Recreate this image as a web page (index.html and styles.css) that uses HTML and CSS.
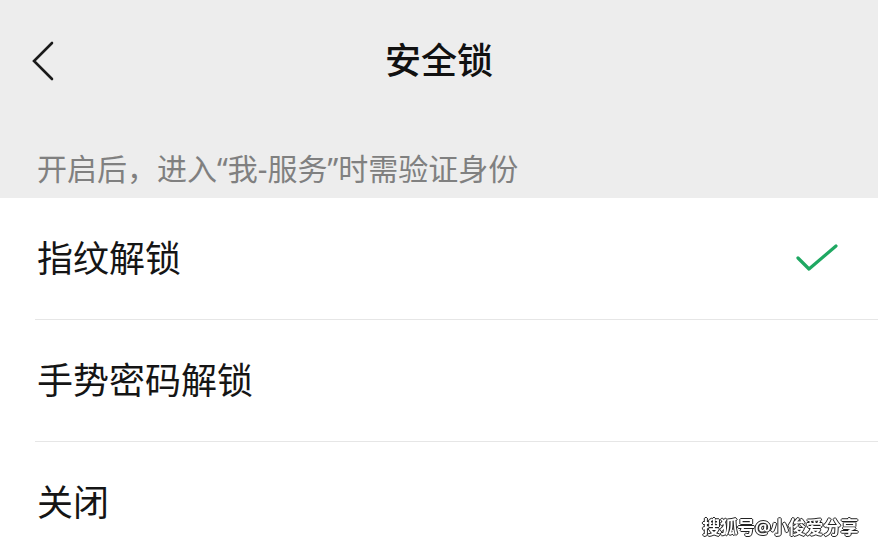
FILE: index.html
```html
<!DOCTYPE html>
<html lang="zh-CN">
<head>
    <meta charset="UTF-8">
    <meta name="viewport" content="width=device-width, initial-scale=1.0">
    <title>安全锁</title>
    <link rel="stylesheet" href="styles.css">
</head>
<body>
    <div class="header">
        <div class="nav">
            <div class="nav-left">
                <svg class="back" width="24" height="40" viewBox="0 0 24 40">
                    <polyline points="21,2 3,20 21,38" fill="none" stroke="#1a1a1a" stroke-width="2.6" stroke-linecap="round" stroke-linejoin="miter"/>
                </svg>
            </div>
            <div class="title">安全锁</div>
            <div class="nav-right"></div>
        </div>
        <div class="tip">开启后，进入“我-服务”时需验证身份</div>
    </div>

    <div class="list">
        <div class="item">
            <span class="label">指纹解锁</span>
            <svg class="check" width="44" height="32" viewBox="0 0 44 32">
                <polyline points="3,15 14,26 41,3" fill="none" stroke="#1fa862" stroke-width="3.2" stroke-linecap="round" stroke-linejoin="round"/>
            </svg>
        </div>
        <div class="item">
            <span class="label">手势密码解锁</span>
        </div>
        <div class="item">
            <span class="label">关闭</span>
        </div>
    </div>

    <div class="watermark">搜狐号@小俊爱分享</div>
</body>
</html>
```

FILE: styles.css
```css
body {
    font-family: "Noto Sans", "Noto Sans CJK SC", sans-serif;
    margin: 0;
    background-color: #ffffff;
    color: #1a1a1a;
    overflow: hidden;
}

.header {
    background-color: #ededed;
}

.nav {
    height: 122px;
    display: grid;
    grid-template-columns: 1fr auto 1fr;
    align-items: center;
}

.nav-left {
    padding-left: 31px;
    display: flex;
    align-items: center;
}

.back {
    display: block;
}

.title {
    font-size: 36px;
    font-weight: 500;
    color: #111;
    line-height: 40px;
}

.tip {
    padding: 30px 37px 12px;
    font-size: 30px;
    line-height: 34px;
    color: #808080;
}

.list {
    padding-left: 35px;
}

.item {
    height: 121px;
    display: flex;
    align-items: center;
    justify-content: space-between;
    padding-left: 2px;
    padding-right: 39px;
    border-bottom: 1px solid #e6e6e6;
}

.item:last-child {
    border-bottom: none;
}

.label {
    font-size: 36px;
    line-height: 40px;
    color: #151515;
}

.check {
    display: block;
}

.watermark {
    position: fixed;
    right: 20px;
    bottom: 8px;
    font-size: 18px;
    font-weight: 700;
    color: #ffffff;
    letter-spacing: -0.5px;
    text-shadow: 1px 0 0 #222, -1px 0 0 #222, 0 1px 0 #222, 0 -1px 0 #222;
}
```
